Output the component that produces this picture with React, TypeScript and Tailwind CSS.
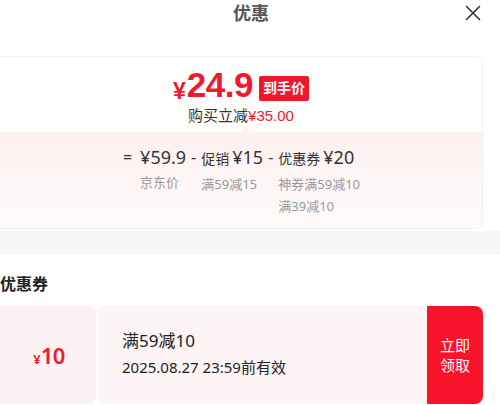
import React from 'react';

const font = { fontFamily: '"Noto Sans", "Noto Sans CJK SC", sans-serif' };
const priceFont = { fontFamily: '"Liberation Sans", "Noto Sans CJK SC", sans-serif' };

const App: React.FC = () => {
  return (
    <div className="w-[500px] h-[405px] overflow-hidden bg-white text-[#333]" style={font}>
      {/* header */}
      <div className="relative h-[56px]">
        <div className="absolute left-0 right-0 top-[1px] text-center text-[18px] leading-[24px] font-bold text-[#555] pl-[2px]">
          优惠
        </div>
        <button className="absolute right-[19px] top-[5px] text-[#333]">
          <svg width="16" height="16" viewBox="0 0 16 16" fill="none" stroke="currentColor" strokeWidth="1.6" strokeLinecap="round">
            <path d="M1.5 1.5 L14.5 14.5 M14.5 1.5 L1.5 14.5" />
          </svg>
        </button>
      </div>

      {/* price card */}
      <div className="pr-[17px]">
        <div className="h-[173px] rounded-r-[8px] border border-l-0 border-[#f0eeee] overflow-hidden flex flex-col">
          <div className="h-[75px] bg-white flex flex-col items-center pt-[8px]" style={priceFont}>
            <div className="flex items-end h-[40px]">
              <span className="text-[#ef1a2e] text-[23px] leading-[27px] font-bold mr-[1px]">¥</span>
              <span className="text-[#ef1a2e] text-[35px] leading-[40px] font-bold tracking-[-0.5px]">24.9</span>
              <span className="ml-[6px] mb-[4px] bg-[#f0172c] text-white text-[14px] leading-[25px] font-bold px-[4px] rounded-[2px]">
                到手价
              </span>
            </div>
            <div className="text-[15px] leading-[18px] mt-[2px] text-[#333]">
              购买立减<span className="text-[#ef1a2e]">¥35.00</span>
            </div>
          </div>
          <div className="relative flex-1 bg-gradient-to-b from-[#fdf1f1] to-[#fffafa] flex justify-center pl-[1px]">
            <div className="absolute top-[-5px] left-[240px] w-0 h-0 border-l-[5px] border-r-[5px] border-b-[5px] border-l-transparent border-r-transparent border-b-[#fdf1f1]" />
            <div className="flex items-start pt-[12px] text-[#333]">
              <span className="text-[16px] leading-[26px] mr-[8px]">=</span>
              <div className="flex flex-col">
                <span className="text-[18px] leading-[26px]">¥59.9</span>
                <span className="text-[13px] leading-[22px] text-[#999] mt-[1px]">京东价</span>
              </div>
              <span className="text-[16px] leading-[26px] mx-[5px]">-</span>
              <div className="flex flex-col">
                <span className="leading-[26px]">
                  <span className="text-[14px]">促销</span>
                  <span className="text-[18px] ml-[3px]">¥15</span>
                </span>
                <span className="text-[13px] leading-[22px] text-[#999] mt-[1px]">满59减15</span>
              </div>
              <span className="text-[16px] leading-[26px] mx-[5px]">-</span>
              <div className="flex flex-col">
                <span className="leading-[26px]">
                  <span className="text-[14px]">优惠券</span>
                  <span className="text-[18px] ml-[3px]">¥20</span>
                </span>
                <span className="text-[13px] leading-[22px] text-[#999] mt-[1px]">神券满59减10</span>
                <span className="text-[13px] leading-[22px] text-[#999]">满39减10</span>
              </div>
            </div>
          </div>
        </div>
      </div>

      {/* divider band */}
      <div className="h-[24px] mt-[2px] bg-[#f6f7f9]" />

      {/* coupons */}
      <div className="pr-[17px]">
        <div className="text-[16px] leading-[22px] font-bold text-[#222] mt-[18px]">优惠券</div>
        <div className="flex h-[98px] mt-[11px]">
          <div className="w-[96px] bg-[#fdf2f3] flex items-center justify-center pl-[2px]">
            <span className="text-[#ef1a2e] font-semibold">
              <span className="text-[13px]">¥</span>
              <span className="text-[22px] tracking-[-0.5px]">10</span>
            </span>
          </div>
          <div className="relative w-[2px] bg-[#fdf2f3]">
            <div className="absolute left-[-3px] top-[-4px] w-[8px] h-[8px] rounded-full bg-white" />
            <div className="absolute left-[-3px] bottom-[-4px] w-[8px] h-[8px] rounded-full bg-white" />
            <div className="absolute left-[0px] top-[4px] bottom-[4px] w-[1px] bg-white" />
          </div>
          <div className="flex-1 bg-[#fdf4f5] flex flex-col justify-center pl-[24px] pb-[4px]">
            <span className="text-[17px] leading-[25px] text-[#222]">满59减10</span>
            <span className="text-[15px] leading-[24px] text-[#222] mt-[2px]">2025.08.27 23:59前有效</span>
          </div>
          <div className="w-[56px] bg-[#f7142b] rounded-r-[8px] flex items-center justify-center">
            <span className="text-white text-[15px] leading-[20px] text-center w-[32px]">立即领取</span>
          </div>
        </div>
      </div>
    </div>
  );
};

export default App;
